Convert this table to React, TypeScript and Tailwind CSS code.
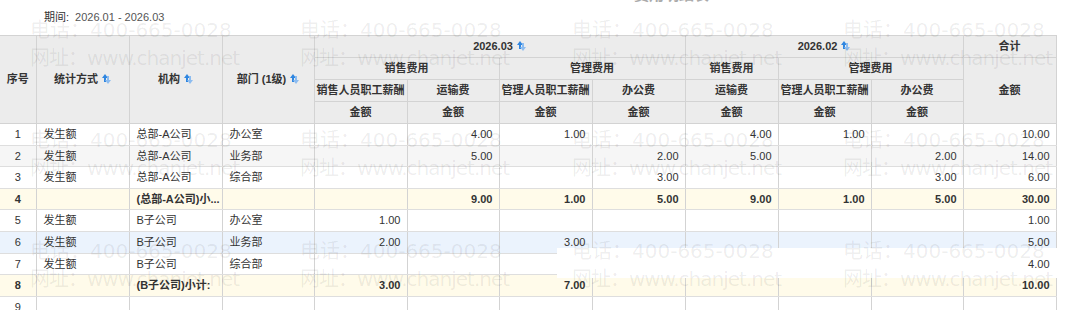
import React from "react";

const colWidths = [36, 93, 93, 92, 93, 92, 93, 93, 93, 93, 92, 93];

type Row = {
  no: string;
  kind: string;
  org: string;
  dept: string;
  vals: string[];
  sub?: boolean;
  bg?: string;
};

const rows: Row[] = [
  { no: "1", kind: "发生额", org: "总部-A公司", dept: "办公室", vals: ["", "4.00", "1.00", "", "4.00", "1.00", "", "10.00"] },
  { no: "2", kind: "发生额", org: "总部-A公司", dept: "业务部", vals: ["", "5.00", "", "2.00", "5.00", "", "2.00", "14.00"], bg: "bg-[#f6f6f6]" },
  { no: "3", kind: "发生额", org: "总部-A公司", dept: "综合部", vals: ["", "", "", "3.00", "", "", "3.00", "6.00"] },
  { no: "4", kind: "", org: "(总部-A公司)小...", dept: "", vals: ["", "9.00", "1.00", "5.00", "9.00", "1.00", "5.00", "30.00"], sub: true },
  { no: "5", kind: "发生额", org: "B子公司", dept: "办公室", vals: ["1.00", "", "", "", "", "", "", "1.00"] },
  { no: "6", kind: "发生额", org: "B子公司", dept: "业务部", vals: ["2.00", "", "3.00", "", "", "", "", "5.00"], bg: "bg-[#ebf3fd]" },
  { no: "7", kind: "发生额", org: "B子公司", dept: "综合部", vals: ["", "", "", "", "", "", "", "4.00"] },
  { no: "8", kind: "", org: "(B子公司)小计:", dept: "", vals: ["3.00", "", "7.00", "", "", "", "", "10.00"], sub: true },
  { no: "9", kind: "", org: "", dept: "", vals: ["", "", "", "", "", "", "", ""] },
];

const wmXs = [30, 300, 572, 843];
const wmYs = [18, 128, 239];

function SortIcon() {
  return (
    <svg width="9" height="10" viewBox="0 0 9 10" className="inline-block ml-[4px] align-[-1px]">
      <path d="M3 0 L6 4 H4 V8 H2 V4 H0 Z" fill="#2f86e0" />
      <path d="M6 10 L3 6 H5 V2 H7 V6 H9 Z" fill="#8cbcf0" />
    </svg>
  );
}

function Th({ children, colSpan, rowSpan }: { children: React.ReactNode; colSpan?: number; rowSpan?: number }) {
  return (
    <th
      colSpan={colSpan}
      rowSpan={rowSpan}
      className="h-[22px] p-0 border border-[#d3d3d3] bg-[#ececec] text-center font-bold text-[#333] whitespace-nowrap"
    >
      {children}
    </th>
  );
}

export default function App() {
  return (
    <div
      className="relative w-[1080px] h-[310px] overflow-hidden bg-white text-[11px] text-[#333]"
      style={{ fontFamily: '"Liberation Sans", "Noto Sans CJK SC", sans-serif' }}
    >
      {/* cut-off title */}
      <div className="h-[4px] overflow-hidden">
        <div className="pl-[634px] -mt-[14px] text-[15px] leading-[18px] font-bold text-[#aaa]">费用明细表</div>
      </div>

      {/* period */}
      <div className="h-[31px] pt-[6px] pl-[44px] leading-[14px]">
        <span className="text-[#333]">期间:</span>
        <span className="ml-[6px] text-[#555]">2026.01 - 2026.03</span>
      </div>

      <table className="table-fixed border-collapse w-[1056px]">
        <colgroup>
          {colWidths.map((w, i) => (
            <col key={i} style={{ width: w }} />
          ))}
        </colgroup>
        <thead>
          <tr>
            <th rowSpan={4} className="p-0 border border-l-0 border-[#d3d3d3] bg-[#ececec] text-center font-bold text-[#333]">序号</th>
            <Th rowSpan={4}>统计方式<SortIcon /></Th>
            <Th rowSpan={4}>机构<SortIcon /></Th>
            <Th rowSpan={4}>部门 (1级)<SortIcon /></Th>
            <Th colSpan={4}>2026.03<SortIcon /></Th>
            <Th colSpan={3}>2026.02<SortIcon /></Th>
            <Th>合计</Th>
          </tr>
          <tr>
            <Th colSpan={2}>销售费用</Th>
            <Th colSpan={2}>管理费用</Th>
            <Th>销售费用</Th>
            <Th colSpan={2}>管理费用</Th>
            <Th rowSpan={3}>金额</Th>
          </tr>
          <tr>
            <Th>销售人员职工薪酬</Th>
            <Th>运输费</Th>
            <Th>管理人员职工薪酬</Th>
            <Th>办公费</Th>
            <Th>运输费</Th>
            <Th>管理人员职工薪酬</Th>
            <Th>办公费</Th>
          </tr>
          <tr>
            {Array.from({ length: 7 }).map((_, i) => (
              <Th key={i}>金额</Th>
            ))}
          </tr>
        </thead>
        <tbody>
          {rows.map((r) => {
            const bg = r.sub ? "bg-[#fffbea] font-bold" : r.bg ?? "bg-white";
            const cell = "h-[21.6px] p-0 border-r border-b border-r-[#d3d3d3] border-b-[#dedede] whitespace-nowrap overflow-hidden";
            return (
              <tr key={r.no} className={bg}>
                <td className={`${cell} text-center`}>{r.no}</td>
                <td className={`${cell} pl-[7px]`}>{r.kind}</td>
                <td className={`${cell} pl-[7px]`}>{r.org}</td>
                <td className={`${cell} pl-[7px]`}>{r.dept}</td>
                {r.vals.map((v, i) => (
                  <td key={i} className={`${cell} text-right pr-[6px]`}>
                    <span className={r.no === "7" && i === 7 ? "relative z-[25]" : ""}>{v}</span>
                  </td>
                ))}
              </tr>
            );
          })}
        </tbody>
      </table>

      {/* stray white patch over the lower right of the grid */}
      <div className="absolute left-[557px] top-[248px] w-[523px] h-[30px] bg-white z-20" />

      {/* watermark */}
      <div className="absolute inset-0 pointer-events-none z-30" style={{ fontFamily: '"DejaVu Sans", "Noto Sans CJK SC", sans-serif' }}>
        {wmYs.map((y) =>
          wmXs.map((x) => (
            <div
              key={`${x}-${y}`}
              className="absolute flex flex-col gap-[4px] text-[20px] leading-[24px] whitespace-nowrap text-[rgba(0,0,0,0.075)]"
              style={{ left: x, top: y }}
            >
              <span>电话：400-665-0028</span>
              <span className="tracking-[-1px]">网址：www.chanjet.net</span>
            </div>
          ))
        )}
      </div>
    </div>
  );
}
